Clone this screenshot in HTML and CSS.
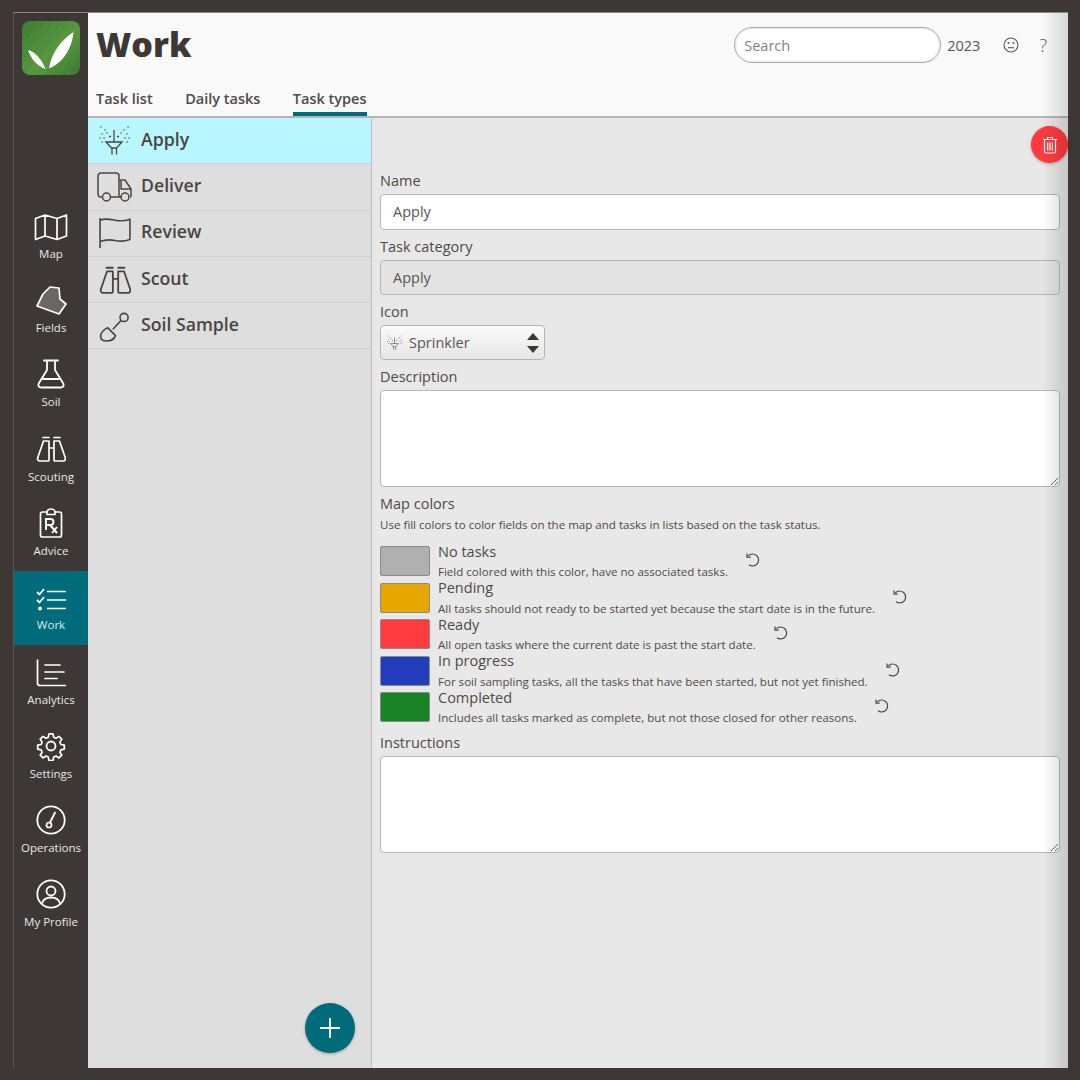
FILE: index.html
```html
<!DOCTYPE html>
<html lang="en">
<head>
    <meta charset="UTF-8">
    <meta name="viewport" content="width=device-width, initial-scale=1.0">
    <title>Work</title>
    <link rel="stylesheet" href="styles.css">
</head>
<body>
    <svg class="icon-defs" width="0" height="0">
        <defs>
            <symbol id="i-sprinkler" viewBox="0 0 32 32">
                <path d="M15 5v12M7 17h16l-5.500 6H12.500zM13 23v6.500M17.500 23v6.500M10 11.500h2M18 11.500h2" fill="none" stroke="currentColor" stroke-width="1.300"/>
                <path d="M2 2h.1M6 5h.1M3 9h.1M8 8h.1M1 13h.1M5 13h.1M3 17h.1M29 2h.1M25 5h.1M28 9h.1M22 8h.1M30 13h.1M26 13h.1M28 17h.1" fill="none" stroke="currentColor" stroke-width="1.300" stroke-linecap="round"/>
            </symbol>
            <symbol id="i-binoculars" viewBox="0 0 30 30">
                <path d="M7 3.500h6M18 3.500h6M7.500 7L1.800 23.500c-.6 2 .4 3.500 2 3.500H12a1 1 0 0 0 1-1V7zM23.500 7l5.700 16.500c.6 2-.4 3.500-2 3.500H19a1 1 0 0 1-1-1V7zM13 14h5" fill="none" stroke="currentColor" stroke-width="1.700" stroke-linejoin="round" stroke-linecap="round"/>
            </symbol>
        </defs>
    </svg>

    <div class="app">
        <nav class="sidebar">
            <div class="logo">
                <svg viewBox="0 0 58 54" width="58" height="54">
                    <path d="M6 29c7 2 13 8 17.500 19C15 45 9 38 6 29z" fill="#fff"/>
                    <path d="M51.500 11C50 28 41 42 27 47.500 29 33 38 20 51.500 11z" fill="#fff"/>
                </svg>
            </div>
            <a class="nav-item">
                <svg viewBox="0 0 34 28" width="34" height="28"><path d="M1.500 5.500L11 2l12 3.500L32.500 2v21L23 26.500 11 23l-9.500 3.500zM11 2v21M23 5.500v21" fill="none" stroke="currentColor" stroke-width="1.700" stroke-linejoin="round"/></svg>
                <span>Map</span>
            </a>
            <a class="nav-item">
                <svg viewBox="0 0 31 30" width="31" height="30"><path d="M14 2l9 1 1 11 6 5-7 10-22-8 6-12z" fill="#6a6663" stroke="currentColor" stroke-width="1.700" stroke-linejoin="round"/></svg>
                <span>Fields</span>
            </a>
            <a class="nav-item">
                <svg viewBox="0 0 28 30" width="28" height="30"><path d="M7 1.500h14M10 2v9L2 24c-1.500 2.500 0 4.500 2.500 4.500h19c2.500 0 4-2 2.500-4.500L18 11V2M6 20h16" fill="none" stroke="currentColor" stroke-width="1.800" stroke-linejoin="round" stroke-linecap="round"/></svg>
                <span>Soil</span>
            </a>
            <a class="nav-item">
                <svg width="30" height="30"><use href="#i-binoculars"/></svg>
                <span>Scouting</span>
            </a>
            <a class="nav-item">
                <svg viewBox="0 0 24 30" width="24" height="30"><path d="M8 4H3.500A2 2 0 0 0 1.500 6v21a2 2 0 0 0 2 2h17a2 2 0 0 0 2-2V6a2 2 0 0 0-2-2H16M8 6.500V4a4 3 0 0 1 8 0v2.500z" fill="none" stroke="currentColor" stroke-width="1.700" stroke-linejoin="round"/><path d="M7 22V11h4.500a3 3 0 0 1 0 6H7M11 17l7 8M18 19l-5 6" fill="none" stroke="currentColor" stroke-width="1.900"/></svg>
                <span>Advice</span>
            </a>
            <a class="nav-item active">
                <svg viewBox="0 0 30 24" width="30" height="24"><path d="M1 4l2.500 2.500L8 1M1 12l2.500 2.500L8 9" fill="none" stroke="currentColor" stroke-width="1.800"/><path d="M11 3.500h19M11 12h19M11 20.500h19" stroke="currentColor" stroke-width="1.600"/><circle cx="4" cy="20.500" r="2" fill="currentColor"/></svg>
                <span>Work</span>
            </a>
            <a class="nav-item">
                <svg viewBox="0 0 30 28" width="30" height="28"><path d="M1.500 1v23a2.500 2.500 0 0 0 2.500 2.500h25.500M9 6h15M9 13h19M9 19.500h12" fill="none" stroke="currentColor" stroke-width="1.700" stroke-linecap="round"/></svg>
                <span>Analytics</span>
            </a>
            <a class="nav-item">
                <svg viewBox="0 0 30 30" width="30" height="30"><circle cx="15" cy="15" r="4.500" fill="none" stroke="currentColor" stroke-width="1.800"/><path d="M12.800 1.500h4.400l.8 3.800 2.600 1.100 3.300-2.100 3.100 3.100-2.100 3.300 1.100 2.600 3.800.8v4.400l-3.800.8-1.100 2.600 2.100 3.300-3.100 3.100-3.300-2.100-2.600 1.100-.8 3.800h-4.400l-.8-3.800-2.600-1.100-3.300 2.100-3.100-3.100 2.100-3.300-1.100-2.600-3.800-.8v-4.400l3.800-.8 1.100-2.600-2.100-3.300 3.100-3.100 3.300 2.100 2.600-1.100z" transform="translate(1.500 1.500) scale(.9)" fill="none" stroke="currentColor" stroke-width="1.900" stroke-linejoin="round"/></svg>
                <span>Settings</span>
            </a>
            <a class="nav-item">
                <svg viewBox="0 0 30 30" width="30" height="30"><circle cx="15" cy="15" r="13.700" fill="none" stroke="currentColor" stroke-width="1.800"/><circle cx="13" cy="20" r="2.500" fill="none" stroke="currentColor" stroke-width="1.700"/><path d="M14 17.500L19 7.500" stroke="currentColor" stroke-width="1.800" stroke-linecap="round"/></svg>
                <span>Operations</span>
            </a>
            <a class="nav-item">
                <svg viewBox="0 0 30 30" width="30" height="30"><circle cx="15" cy="15" r="13.700" fill="none" stroke="currentColor" stroke-width="1.800"/><circle cx="15" cy="12" r="4.500" fill="none" stroke="currentColor" stroke-width="1.800"/><path d="M6 24.500c1-4 4.500-6 9-6s8 2 9 6" fill="none" stroke="currentColor" stroke-width="1.800"/></svg>
                <span>My Profile</span>
            </a>
        </nav>

        <div class="main">
            <header class="topbar">
                <div class="topbar-row">
                    <h1>Work</h1>
                    <div class="top-tools">
                        <input class="search" type="text" placeholder="Search">
                        <span class="year">2023</span>
                        <svg class="smiley" viewBox="0 0 16 16" width="16" height="16"><circle cx="8" cy="8" r="7" fill="none" stroke="currentColor" stroke-width="1.100"/><path d="M5 10.700h6" stroke="currentColor" stroke-width="1.100"/><circle cx="5.500" cy="6" r="1" fill="currentColor"/><circle cx="10.500" cy="6" r="1" fill="currentColor"/></svg>
                        <span class="help">?</span>
                    </div>
                </div>
                <div class="tabs">
                    <a class="tab">Task list</a>
                    <a class="tab">Daily tasks</a>
                    <a class="tab active">Task types</a>
                </div>
            </header>

            <div class="content">
                <aside class="type-list">
                    <div class="type-item selected">
                        <svg class="type-icon"><use href="#i-sprinkler"/></svg>
                        <span>Apply</span>
                    </div>
                    <div class="type-item">
                        <svg class="type-icon" viewBox="0 0 36 30"><path d="M6 25H4a3 3 0 0 1-3-3V4a3 3 0 0 1 3-3h15a3 3 0 0 1 3 3v21H13M22 8h6l6 9v7a1 1 0 0 1-1 1M22 25h3M24 9v8h10" fill="none" stroke="currentColor" stroke-width="1.500" stroke-linejoin="round"/><circle cx="9.500" cy="25" r="4" fill="none" stroke="currentColor" stroke-width="1.500"/><circle cx="28" cy="25" r="4" fill="none" stroke="currentColor" stroke-width="1.500"/></svg>
                        <span>Deliver</span>
                    </div>
                    <div class="type-item">
                        <svg class="type-icon" viewBox="0 0 32 30"><path d="M2 1v28M2 3c5-2 9-1 14 0s9 1 14-1v19c-5 2-9 2-14 1s-9-1-14 1" fill="none" stroke="currentColor" stroke-width="1.500" stroke-linejoin="round"/></svg>
                        <span>Review</span>
                    </div>
                    <div class="type-item">
                        <svg class="type-icon" viewBox="0 0 30 30"><use href="#i-binoculars" width="30" height="30"/></svg>
                        <span>Scout</span>
                    </div>
                    <div class="type-item">
                        <svg class="type-icon" viewBox="0 0 30 30"><path d="M13 18L20.500 10M8 16.500l7.500 7.500c-1 2.500-4 5-8 5-3.500 0-6-1.500-6-4.500 0-3 3-6 6.500-8z" fill="none" stroke="currentColor" stroke-width="1.500" stroke-linejoin="round"/><circle cx="23.500" cy="7" r="3.800" fill="none" stroke="currentColor" stroke-width="1.500"/></svg>
                        <span>Soil Sample</span>
                    </div>
                    <button class="fab-add" type="button">
                        <svg viewBox="0 0 22 22" width="22" height="22"><path d="M11 1v20M1 11h20" stroke="#fff" stroke-width="1.800"/></svg>
                    </button>
                </aside>

                <section class="detail">
                    <button class="fab-delete" type="button">
                        <svg viewBox="0 0 16 18" width="16" height="18"><path d="M1 3.500h14M5.500 3V1.500h5V3M2.500 4v11.500a1.500 1.500 0 0 0 1.500 1.500h8a1.500 1.500 0 0 0 1.500-1.500V4M5.700 6.500v8M8 6.500v8M10.300 6.500v8" fill="none" stroke="#fff" stroke-width="1.200"/></svg>
                    </button>

                    <label class="field-label">Name</label>
                    <input class="text-input" type="text" value="Apply">

                    <label class="field-label">Task category</label>
                    <input class="text-input readonly" type="text" value="Apply" readonly>

                    <label class="field-label">Icon</label>
                    <div class="icon-select">
                        <svg width="16" height="16"><use href="#i-sprinkler"/></svg>
                        <span>Sprinkler</span>
                        <svg class="arrows" viewBox="0 0 12 20" width="12" height="20"><path d="M6 0l6 7H0zM6 20l6-7H0z" fill="#3d3835"/></svg>
                    </div>

                    <label class="field-label">Description</label>
                    <textarea class="text-area"></textarea>

                    <label class="field-label">Map colors</label>
                    <p class="hint">Use fill colors to color fields on the map and tasks in lists based on the task status.</p>

                    <div class="color-list">
                        <div class="color-row">
                            <div class="swatch grey"></div>
                            <div class="color-text"><div class="color-name">No tasks</div><div class="color-desc">Field colored with this color, have no associated tasks.</div></div>
                            <svg class="reset" width="16" height="16"><use href="#i-reset"/></svg>
                        </div>
                        <div class="color-row">
                            <div class="swatch amber"></div>
                            <div class="color-text"><div class="color-name">Pending</div><div class="color-desc">All tasks should not ready to be started yet because the start date is in the future.</div></div>
                            <svg class="reset" width="16" height="16"><use href="#i-reset"/></svg>
                        </div>
                        <div class="color-row">
                            <div class="swatch red"></div>
                            <div class="color-text"><div class="color-name">Ready</div><div class="color-desc">All open tasks where the current date is past the start date.</div></div>
                            <svg class="reset" width="16" height="16"><use href="#i-reset"/></svg>
                        </div>
                        <div class="color-row">
                            <div class="swatch blue"></div>
                            <div class="color-text"><div class="color-name">In progress</div><div class="color-desc">For soil sampling tasks, all the tasks that have been started, but not yet finished.</div></div>
                            <svg class="reset" width="16" height="16"><use href="#i-reset"/></svg>
                        </div>
                        <div class="color-row">
                            <div class="swatch green"></div>
                            <div class="color-text"><div class="color-name">Completed</div><div class="color-desc">Includes all tasks marked as complete, but not those closed for other reasons.</div></div>
                            <svg class="reset" width="16" height="16"><use href="#i-reset"/></svg>
                        </div>
                    </div>

                    <label class="field-label">Instructions</label>
                    <textarea class="text-area"></textarea>
                </section>
            </div>
            <div class="edge-shade"></div>
        </div>
    </div>

    <svg class="icon-defs" width="0" height="0">
        <defs>
            <symbol id="i-reset" viewBox="0 0 16 16">
                <path d="M3.300 3.800A6 6 0 1 1 4 12.800" fill="none" stroke="currentColor" stroke-width="1.200"/>
                <path d="M2 1.500v3.700h3.700" fill="none" stroke="currentColor" stroke-width="1.200"/>
            </symbol>
        </defs>
    </svg>
</body>
</html>
```
FILE: styles.css
```css
* {
    box-sizing: border-box;
}

body {
    margin: 0;
    height: 1080px;
    padding: 12px 12px 12px 13px;
    background: #3d3835;
    font-family: "Open Sans", Arial, sans-serif;
    color: #4a4542;
    overflow: hidden;
}

.icon-defs {
    position: absolute;
}

.app {
    display: flex;
    height: 1056px;
    border-top: 1px solid #8c8987;
    border-left: 1px solid #5a5653;
}

/* left nav */
.sidebar {
    width: 74px;
    flex-shrink: 0;
    background: #3d3835;
    color: #f2f2f2;
}

.logo {
    width: 58px;
    height: 54px;
    margin: 8px 0 124.5px 8px;
    border-radius: 8px;
    background:
        repeating-linear-gradient(118deg, rgba(255, 255, 255, 0.012) 0 3px, rgba(0, 0, 0, 0.012) 3px 7px),
        linear-gradient(135deg, #3d7a34, #57993f 55%, #3a7a30);
}

.logo svg {
    display: block;
}

.nav-item {
    display: flex;
    flex-direction: column;
    align-items: center;
    justify-content: flex-end;
    height: 74.3px;
    padding-bottom: 12px;
    font-size: 11.5px;
    line-height: 16px;
    color: #e8e8e8;
}

.nav-item svg {
    margin-bottom: 5px;
    color: #fff;
}

.nav-item.active {
    background: #006b7b;
    color: #d6eef2;
}

/* header + tabs */
.main {
    position: relative;
    flex: 1;
    display: flex;
    flex-direction: column;
    min-width: 0;
}

.topbar {
    height: 105px;
    flex-shrink: 0;
    background: #f9f9f9;
    border-bottom: 2px solid #b5b5b5;
    padding: 0 8px;
}

.topbar-row {
    display: flex;
    justify-content: space-between;
    height: 74px;
}

h1 {
    margin: 6px 0 0;
    font-size: 34px;
    line-height: 50px;
    font-weight: 800;
    color: #3d3835;
}

.top-tools {
    display: flex;
    align-items: center;
    height: 36px;
    margin-top: 14px;
    padding-right: 13px;
}

.search {
    width: 207px;
    height: 36px;
    padding: 0 9px;
    border: 1.5px solid #aaa;
    border-radius: 18px;
    background: #fff;
    box-shadow: inset 0 0 3px rgba(0, 0, 0, 0.2);
    font: 14.5px "Open Sans", Arial, sans-serif;
    color: #4a4542;
}

.search::placeholder {
    color: #85817e;
}

.year {
    margin-left: 6px;
    font-size: 14.5px;
    color: #5a5653;
}

.smiley {
    margin-left: 23px;
    color: #5a5653;
}

.help {
    margin-left: 20px;
    font-size: 18px;
    font-weight: 300;
    color: #5a5653;
}

.tabs {
    display: flex;
    gap: 32.5px;
    height: 29px;
}

.tab {
    height: 29px;
    padding-top: 2px;
    font-size: 14.5px;
    line-height: 20px;
    font-weight: 600;
    color: #4f4a47;
}

.tab.active {
    border-bottom: 4px solid #006b7b;
}

.content {
    flex: 1;
    display: flex;
    min-height: 0;
}

/* task type list */
.type-list {
    position: relative;
    width: 284px;
    flex-shrink: 0;
    background: #dedede;
    border-right: 1px solid #bdbdbd;
}

.type-item {
    display: flex;
    align-items: center;
    height: 46.3px;
    border-bottom: 1px solid #d0d0d0;
    font-size: 17.7px;
    font-weight: 600;
    color: #4a4542;
}

.type-item span {
    margin-bottom: 4px;
}

.type-item.selected {
    background: #b9f6ff;
}

.type-icon {
    flex-shrink: 0;
    width: 36px;
    height: 32px;
    margin: 0 8px 0 9px;
}

.fab-add {
    position: absolute;
    right: 16px;
    bottom: 15px;
    width: 50px;
    height: 50px;
    display: flex;
    align-items: center;
    justify-content: center;
    border: none;
    border-radius: 50%;
    background: #006b7b;
    box-shadow: 0 1px 3px rgba(0, 0, 0, 0.3);
}

/* detail form */
.detail {
    position: relative;
    flex: 1;
    display: flex;
    flex-direction: column;
    align-items: flex-start;
    padding: 53.3px 8px 0;
    background: #e8e8e8;
}

.fab-delete {
    position: absolute;
    top: 8px;
    right: 0;
    width: 37px;
    height: 37px;
    display: flex;
    align-items: center;
    justify-content: center;
    border: none;
    border-radius: 50%;
    background: #ff3b3f;
    box-shadow: 0 1px 3px rgba(0, 0, 0, 0.3);
}

.field-label {
    display: block;
    height: 20px;
    margin-bottom: 3px;
    font-size: 14.5px;
    line-height: 20px;
    color: #4f4a47;
}

.text-input {
    display: block;
    width: 100%;
    height: 35.33px;
    margin-bottom: 7px;
    padding: 0 12px;
    border: 1px solid #b5b5b5;
    border-radius: 4px;
    background: #fff;
    font: 14.5px "Open Sans", Arial, sans-serif;
    color: #5a5653;
}

.text-input.readonly {
    background: #e4e4e4;
}

.icon-select {
    display: flex;
    align-items: center;
    width: 165px;
    height: 35.33px;
    margin-bottom: 7px;
    padding: 0 5px 0 6px;
    border: 1px solid #b5b5b5;
    border-radius: 4px;
    background: linear-gradient(#fafafa, #e6e6e6);
    font-size: 14.5px;
    color: #5a5653;
}

.icon-select span {
    margin-left: 6px;
}

.icon-select .arrows {
    margin-left: auto;
}

.text-area {
    display: block;
    width: 100%;
    height: 97px;
    margin-bottom: 7px;
    border: 1px solid #b5b5b5;
    border-radius: 4px;
    background: #fff;
}

.hint {
    margin: 0 0 13px;
    font-size: 11.55px;
    line-height: 16px;
    color: #4f4a47;
}

.color-list {
    display: flex;
    flex-direction: column;
    margin-bottom: 4.5px;
}

.color-row {
    display: flex;
    align-items: flex-start;
    height: 36.5px;
}

.swatch {
    width: 50px;
    height: 30px;
    flex-shrink: 0;
    border: 1.5px solid #8a8a8a;
    border-radius: 2px;
}

.swatch.grey { background: #b0b0b0; }
.swatch.amber { background: #e6a800; }
.swatch.red { background: #ff3b3f; }
.swatch.blue { background: #213fbd; }
.swatch.green { background: #188224; }

.color-text {
    margin: -4.7px 0 0 8px;
}

.color-name {
    height: 20px;
    font-size: 14.5px;
    line-height: 20px;
    color: #4f4a47;
}

.color-desc {
    height: 16px;
    margin-top: 2.5px;
    font-size: 11.55px;
    line-height: 16px;
    color: #4f4a47;
}

.reset {
    margin: 6px 0 0 17px;
    color: #4a4542;
    flex-shrink: 0;
}

.edge-shade {
    position: absolute;
    top: 0;
    right: 0;
    bottom: 0;
    width: 26px;
    pointer-events: none;
    background: linear-gradient(90deg, rgba(0, 0, 0, 0), rgba(0, 0, 0, 0.14));
}
```
